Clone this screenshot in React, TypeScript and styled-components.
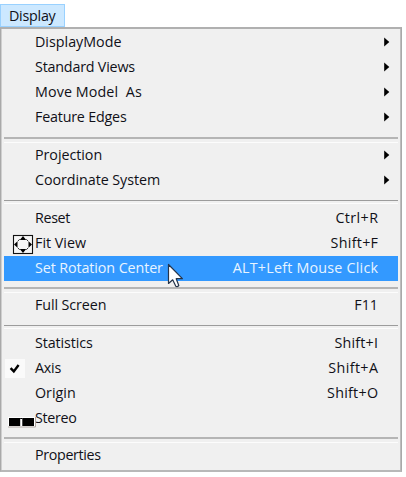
import React from 'react';
import styled, { createGlobalStyle } from 'styled-components';

const GlobalStyle = createGlobalStyle`
  * { box-sizing: border-box; }
  body { margin: 0; background: #fff; overflow: hidden; }
`;

const Page = styled.main`
  width: 406px;
  height: 477px;
  padding-top: 4px;
  font-family: 'Open Sans', 'Noto Sans', sans-serif;
  font-size: 14.3px;
  color: #101018;
  cursor: default;
`;

const MenuTitle = styled.div`
  width: 65px;
  height: 23px;
  padding-left: 8px;
  border: 1px solid #99d1ff;
  background: #cce8ff;
  line-height: 22px;
  letter-spacing: -0.25px;
`;

const Panel = styled.div`
  width: 402px;
  height: 445px;
  padding: 1px 3px 0 3px;
  border: 1px solid #a9a9a9;
  border-width: 2px 1px 2px 1px;
  border-top-color: #b0b0b0;
  border-bottom-color: #b8b8b8;
  background: #f0f0f0;
  box-shadow: inset 1px 0 #cfcfcf, inset -1px 0 #bdbdbd;
`;

const Row = styled.div<{ $active?: boolean }>`
  position: relative;
  display: flex;
  justify-content: space-between;
  align-items: flex-start;
  height: 25px;
  padding: 0 20px 0 31px;
  line-height: 23px;
  white-space: pre;
  color: ${(p) => (p.$active ? '#e8f4ff' : 'inherit')};
  background: ${(p) => (p.$active ? '#3399ff' : 'transparent')};
`;

const Label = styled.span<{ $spacing: number }>`
  letter-spacing: ${(p) => p.$spacing}px;
  margin-right: ${(p) => -p.$spacing}px;
`;

const Separator = styled.div<{ $height: number; $top: number; $thin?: boolean }>`
  height: ${(p) => p.$height}px;
  padding-top: ${(p) => p.$top}px;
  &::before {
    content: '';
    display: block;
    height: ${(p) => (p.$thin ? 2 : 3)}px;
    border-top: ${(p) => (p.$thin ? '1px solid #9c9c9c' : '2px solid #b5b5b5')};
    border-bottom: 1px solid #fcfcfc;
  }
`;

const Arrow = styled.svg`
  width: 6px;
  height: 10px;
  margin: 7px -12px 0 0;
`;

const Mark = styled.svg<{ $x: number; $y: number }>`
  position: absolute;
  left: ${(p) => p.$x}px;
  top: ${(p) => p.$y}px;
`;

const Pointer = styled.svg`
  position: absolute;
  left: 163px;
  top: 7px;
  z-index: 1;
`;

const FitIcon = () => (
  <Mark $x={8} $y={3} width="22" height="21" viewBox="0 0 22 21">
    <rect x="1.5" y="1.5" width="19" height="18" fill="#f6f6f6" stroke="#111" strokeWidth="1.1" />
    <path d="M11 2 14.2 6H7.8ZM11 19 7.8 15h6.4ZM2 10.5 5.5 7.2v6.6ZM20 10.5l-3.5-3.3v6.6Z" fill="#000" />
    <path d="M5.8 7.2 7.7 5.2M14.3 5.2 16.2 7.2M5.8 13.8 7.7 15.8M16.2 13.8 14.3 15.8" stroke="#333" strokeWidth="1" />
  </Mark>
);

const CheckIcon = () => (
  <Mark $x={1} $y={3} width="20" height="19" viewBox="0 0 20 19">
    <rect width="20" height="19" fill="#fafafa" />
    <path d="M5.6 9.2 8.8 12.4 13.6 6" fill="none" stroke="#000" strokeWidth="2.4" />
  </Mark>
);

const StereoIcon = () => (
  <Mark $x={4} $y={11} width="28" height="11" viewBox="0 0 28 11">
    <rect width="27" height="9.5" fill="#fff" />
    <path d="M0 10H27.5V0" fill="none" stroke="#b0a8a4" strokeWidth="1" />
    <path d="M1 1H12.2V9H1ZM14.3 1H26V9H14.3Z" fill="#000" />
    <path d="M12.2 1.5h2.1" stroke="#000" />
  </Mark>
);

const Cursor = () => (
  <Pointer width="18" height="26" viewBox="0 0 18 26">
    <path d="M1.5 1.5V20.5L5.7 16.8 8.8 23.2Q10.3 24.2 11.8 22.5L9.2 15.7H15.4Z" fill="#fff" stroke="#25344a" strokeWidth="1.2" strokeLinejoin="round" />
  </Pointer>
);

type Item = {
  label: string;
  ls?: number;
  keys?: string;
  ks?: number;
  submenu?: boolean;
  active?: boolean;
  icon?: React.ReactNode;
};
type Gap = { gap: number; top: number; thin?: boolean };

const entries: (Item | Gap)[] = [
  { label: 'DisplayMode', submenu: true },
  { label: 'Standard Views', ls: -0.2, submenu: true },
  { label: 'Move Model  As', ls: 0.1, submenu: true },
  { label: 'Feature Edges', ls: -0.2, submenu: true },
  { gap: 13, top: 7 },
  { label: 'Projection', ls: -0.05, submenu: true },
  { label: 'Coordinate System', ls: -0.06, submenu: true },
  { gap: 13, top: 7, thin: true },
  { label: 'Reset', ls: -0.35, keys: 'Ctrl+R', ks: 0.4 },
  { label: 'Fit View', keys: 'Shift+F', ks: 0.3 },
  { label: 'Set Rotation Center', ls: -0.1, keys: 'ALT+Left Mouse Click', ks: 0.22, active: true },
  { gap: 12, top: 6 },
  { label: 'Full Screen', ls: -0.1, keys: 'F11' },
  { gap: 13, top: 7, thin: true },
  { label: 'Statistics', ls: -0.1, keys: 'Shift+I', ks: 0.2 },
  { label: 'Axis', ls: -0.2, keys: 'Shift+A', ks: 0.4 },
  { label: 'Origin', keys: 'Shift+O', ks: 0.25 },
  { label: 'Stereo', ls: -0.3 },
  { gap: 12, top: 6 },
  { label: 'Properties', ls: -0.35 },
];

const icons: Record<string, React.ReactNode> = {
  'Fit View': <FitIcon />,
  'Set Rotation Center': <Cursor />,
  Axis: <CheckIcon />,
  Stereo: <StereoIcon />,
};

export default function App() {
  return (
    <Page>
      <GlobalStyle />
      <MenuTitle>Display</MenuTitle>
      <Panel>
        {entries.map((e, i) =>
          'gap' in e ? (
            <Separator key={i} $height={e.gap} $top={e.top} $thin={e.thin} />
          ) : (
            <Row key={i} $active={e.active}>
              {icons[e.label]}
              <Label $spacing={e.ls ?? 0}>{e.label}</Label>
              {e.keys && <Label $spacing={e.ks ?? 0}>{e.keys}</Label>}
              {e.submenu && (
                <Arrow viewBox="0 0 6 10">
                  <path d="M0.2 .5 5.3 5 .2 9.5Z" fill="#000" />
                </Arrow>
              )}
            </Row>
          ),
        )}
      </Panel>
    </Page>
  );
}
